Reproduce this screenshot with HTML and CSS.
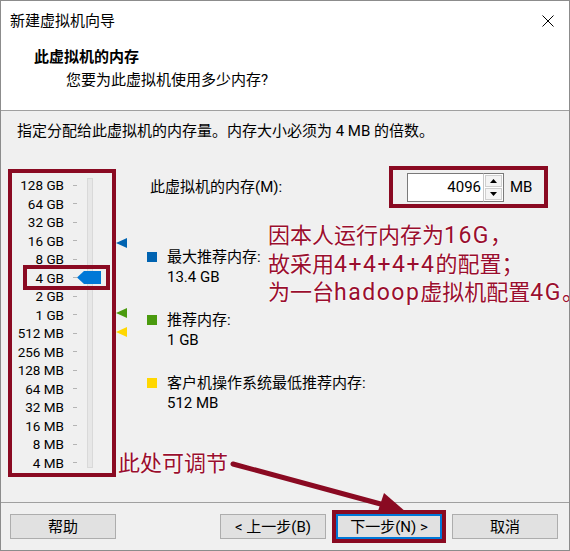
FILE: index.html
```html
<!DOCTYPE html>
<html lang="zh-CN">
<head>
<meta charset="utf-8">
<title>新建虚拟机向导</title>
<link rel="stylesheet" href="styles.css">
</head>
<body>
<div class="window">
  <div class="titlebar">
    <span class="title">新建虚拟机向导</span>
    <svg class="close" width="12" height="12" viewBox="0 0 12 12"><path d="M0.5 0.5L11.5 11.5M11.5 0.5L0.5 11.5" stroke="#000" stroke-width="1" fill="none"/></svg>
  </div>
  <div class="header">
    <div class="h-title">此虚拟机的内存</div>
    <div class="h-sub">您要为此虚拟机使用多少内存?</div>
  </div>
  <div class="body">
    <div class="intro">指定分配给此虚拟机的内存量。内存大小必须为 4 MB 的倍数。</div>
    <div class="main">
      <div class="slider">
        <div class="labels">
          <div class="row"><span>128 GB</span><i></i></div>
          <div class="row"><span>64 GB</span><i></i></div>
          <div class="row"><span>32 GB</span><i></i></div>
          <div class="row"><span>16 GB</span><i></i></div>
          <div class="row"><span>8 GB</span><i></i></div>
          <div class="row"><span>4 GB</span><i></i></div>
          <div class="row"><span>2 GB</span><i></i></div>
          <div class="row"><span>1 GB</span><i></i></div>
          <div class="row"><span>512 MB</span><i></i></div>
          <div class="row"><span>256 MB</span><i></i></div>
          <div class="row"><span>128 MB</span><i></i></div>
          <div class="row"><span>64 MB</span><i></i></div>
          <div class="row"><span>32 MB</span><i></i></div>
          <div class="row"><span>16 MB</span><i></i></div>
          <div class="row"><span>8 MB</span><i></i></div>
          <div class="row"><span>4 MB</span><i></i></div>
        </div>
        <div class="track"></div>
        <div class="sel"></div>
        <svg class="thumb" width="24" height="13" viewBox="0 0 24 13"><polygon points="0,6.5 7,0 24,0 24,13 7,13" fill="#0078d7"/></svg>
        <span class="mark m-blue"></span>
        <span class="mark m-green"></span>
        <span class="mark m-yellow"></span>
      </div>
      <div class="right">
        <div class="mem-row">
          <span class="mem-label">此虚拟机的内存(M):</span>
          <div class="mem-frame">
            <div class="input">4096</div>
            <div class="spin">
              <span class="half"><svg width="7" height="4" viewBox="0 0 7 4"><polygon points="0,4 3.5,0 7,4" fill="#000"/></svg></span>
              <span class="half"><svg width="7" height="4" viewBox="0 0 7 4"><polygon points="0,0 3.5,4 7,0" fill="#000"/></svg></span>
            </div>
            <span class="unit">MB</span>
          </div>
        </div>
        <div class="legend">
          <div class="item"><span class="sq sq-blue"></span><div class="txt"><div>最大推荐内存:</div><div>13.4 GB</div></div></div>
          <div class="item"><span class="sq sq-green"></span><div class="txt"><div>推荐内存:</div><div>1 GB</div></div></div>
          <div class="item"><span class="sq sq-yellow"></span><div class="txt"><div>客户机操作系统最低推荐内存:</div><div>512 MB</div></div></div>
        </div>
      </div>
    </div>
  </div>
  <div class="footer">
    <div class="btn">帮助</div>
    <div class="spacer"></div>
    <div class="btn">&lt; 上一步(B)</div>
    <div class="focus-frame"><div class="btn btn-next">下一步(N) &gt;</div></div>
    <div class="btn">取消</div>
  </div>
  <div class="note">
    <div>因本人运行内存为<span class="lat">16G</span>，</div>
    <div>故采用<span class="lat">4+4+4+4</span>的配置；</div>
    <div>为一台<span class="lat">hadoop</span>虚拟机配置<span class="lat">4G</span>。</div>
  </div>
  <div class="note2">此处可调节</div>
  <svg class="arrow" width="570" height="551" viewBox="0 0 570 551">
    <line x1="233" y1="464" x2="388" y2="506" stroke="#8a0a22" stroke-width="5" stroke-linecap="round"/>
    <polygon points="406,512 384,493 377,514" fill="#8a0a22"/>
  </svg>
</div>
</body>
</html>
```

FILE: styles.css
```css
* {
  box-sizing: border-box;
  margin: 0;
  padding: 0;
}

body {
  margin: 0;
  background: #ffffff;
  font-family: Roboto, "Noto Sans CJK SC", sans-serif;
  font-size: 15px;
  color: #000000;
}

.window {
  position: relative;
  width: 570px;
  height: 551px;
  border: 1px solid #8c8c8c;
  background: #f0f0f0;
  display: flex;
  flex-direction: column;
  overflow: hidden;
}

.titlebar {
  height: 40px;
  flex: none;
  background: #ffffff;
  display: flex;
  align-items: center;
  padding-left: 9px;
  padding-right: 15px;
}

.title {
  flex: 1;
  line-height: 20px;
}

.close {
  display: block;
}

.header {
  height: 70px;
  flex: none;
  background: #ffffff;
  border-bottom: 1px solid #a0a0a0;
  padding-top: 6px;
  padding-left: 33px;
}

.h-title {
  font-weight: bold;
  line-height: 20px;
}

.h-sub {
  margin-top: 3px;
  padding-left: 32px;
  line-height: 20px;
}

.body {
  flex: 1;
}

.intro {
  margin-top: 10px;
  padding-left: 16px;
  line-height: 20px;
}

.main {
  margin-top: 25px;
  padding-left: 7px;
  display: flex;
  align-items: flex-start;
}

.slider {
  position: relative;
  width: 108px;
  height: 308px;
  margin-top: 3px;
  border: 4px solid #8a0a22;
  display: flex;
  align-items: flex-start;
}

.labels {
  padding-top: 3px;
}

.row {
  height: 18.5px;
  display: flex;
  align-items: center;
}

.row span {
  width: 52px;
  text-align: right;
  font-size: 13.5px;
  line-height: 18px;
  white-space: nowrap;
}

.row i {
  display: block;
  width: 4px;
  height: 1px;
  margin-left: 9px;
  background: #b4b4b4;
}

.track {
  width: 6px;
  height: 290px;
  margin-top: 5px;
  margin-left: 10px;
  background: #e7e7e7;
  border: 1px solid #d9d9d9;
}

.sel {
  position: absolute;
  left: 11px;
  top: 92px;
  width: 87px;
  height: 25px;
  border: 4px solid #8a0a22;
}

.thumb {
  position: absolute;
  left: 65px;
  top: 98px;
  display: block;
}

.mark {
  position: absolute;
  left: 104px;
  width: 0;
  height: 0;
  border-top: 5.5px solid transparent;
  border-bottom: 5.5px solid transparent;
  border-right: 11px solid #0063b1;
}

.m-blue {
  top: 64.5px;
  border-right-color: #0063b1;
}

.m-green {
  top: 134.5px;
  border-right-color: #4a9a0e;
}

.m-yellow {
  top: 154px;
  border-right-color: #ffd700;
}

.right {
  margin-left: 31px;
  width: 401px;
}

.mem-row {
  display: flex;
  align-items: center;
  justify-content: space-between;
}

.mem-label {
  padding-left: 3px;
  line-height: 20px;
}

.mem-frame {
  width: 159px;
  height: 42px;
  border: 4px solid #8a0a22;
  display: flex;
  align-items: center;
  padding-left: 14px;
}

.input {
  width: 76px;
  height: 29px;
  background: #ffffff;
  border: 1px solid #7a7a7a;
  border-right: none;
  text-align: right;
  padding-right: 2px;
  line-height: 27px;
}

.spin {
  width: 21px;
  height: 29px;
  background: #ffffff;
  border: 1px solid #7a7a7a;
  border-left: 1px solid #c8c8c8;
  display: flex;
  flex-direction: column;
  padding: 1px;
}

.half {
  flex: 1;
  display: flex;
  align-items: center;
  justify-content: center;
  background: #f4f4f4;
  border: 1px solid #cfcfcf;
}

.half + .half {
  margin-top: 1px;
}

.half svg {
  display: block;
}

.unit {
  margin-left: 6px;
  line-height: 20px;
}

.legend {
  margin-top: 39px;
  display: flex;
  flex-direction: column;
  gap: 23px;
}

.item {
  display: flex;
  align-items: flex-start;
}

.sq {
  width: 10px;
  height: 10px;
  margin-top: 5px;
  margin-right: 10px;
  flex: none;
}

.sq-blue {
  background: #0063b1;
}

.sq-green {
  background: #4a9a0e;
}

.sq-yellow {
  background: #ffd700;
}

.txt div {
  line-height: 20px;
}

.footer {
  height: 48px;
  flex: none;
  border-top: 1px solid #a0a0a0;
  display: flex;
  align-items: center;
  padding-left: 9px;
  padding-right: 11px;
}

.spacer {
  flex: 1;
}

.btn {
  width: 106px;
  height: 25px;
  border: 1px solid #adadad;
  background: #e1e1e1;
  display: flex;
  align-items: center;
  justify-content: center;
  line-height: 20px;
  white-space: nowrap;
}

.focus-frame {
  border: 4px solid #8a0a22;
  margin: 0 6px;
}

.btn-next {
  border: 2px solid #0078d7;
}

.note {
  position: absolute;
  left: 267px;
  top: 221px;
  font-size: 22px;
  line-height: 28.5px;
  color: #9a0e2e;
  white-space: nowrap;
  text-shadow: 0 0 2px #ffffff, 0 0 2px #ffffff;
}

.lat {
  font-size: 23px;
  letter-spacing: 1.5px;
}

.note2 {
  position: absolute;
  left: 117px;
  top: 450px;
  font-size: 22px;
  line-height: 26px;
  color: #9a0e2e;
  white-space: nowrap;
  text-shadow: 0 0 2px #ffffff, 0 0 2px #ffffff;
}

.arrow {
  position: absolute;
  left: -1px;
  top: -1px;
  display: block;
  pointer-events: none;
}
```
